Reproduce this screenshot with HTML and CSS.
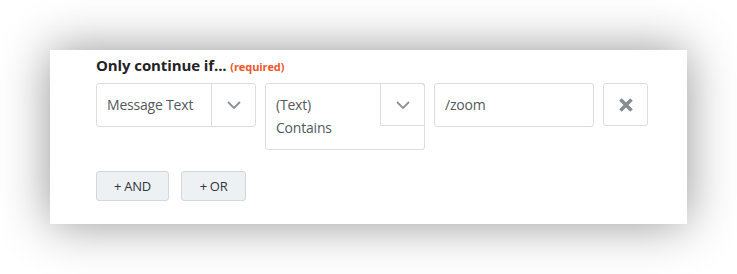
FILE: index.html
```html
<!DOCTYPE html>
<html>
<head>
<meta charset="utf-8">
<link rel="stylesheet" href="styles.css">
</head>
<body>
<div class="card">
  <div class="title">Only continue if... <span class="req">(required)</span></div>
  <div class="row">
    <div class="select">
      <div class="sel-text">Message Text</div>
      <div class="sel-btn">
        <svg width="14" height="8" viewBox="0 0 14 8"><path d="M1 1 L7 7 L13 1" fill="none" stroke="#8b9297" stroke-width="1.8"/></svg>
      </div>
    </div>
    <div class="select tall">
      <div class="sel-text multi">(Text)<br>Contains</div>
      <div class="sel-btn">
        <svg width="14" height="8" viewBox="0 0 14 8"><path d="M1 1 L7 7 L13 1" fill="none" stroke="#8b9297" stroke-width="1.8"/></svg>
      </div>
    </div>
    <div class="input">/zoom</div>
    <div class="remove">
      <svg width="16" height="16" viewBox="0 0 16 16"><path d="M2.5 2.5 L13.5 13.5 M13.5 2.5 L2.5 13.5" stroke="#868d92" stroke-width="3.6" stroke-linecap="butt"/></svg>
    </div>
  </div>
  <div class="actions">
    <button class="btn and">+ AND</button>
    <button class="btn or">+ OR</button>
  </div>
</div>
</body>
</html>
```
FILE: styles.css
```css
html, body {
  margin: 0;
  padding: 0;
  background: #ffffff;
}
body {
  height: 274px;
  box-sizing: border-box;
  padding: 50px 0 0 50px;
  font-family: "Open Sans", "Noto Sans", sans-serif;
}
.card {
  width: 637px;
  height: 174px;
  box-sizing: border-box;
  background: #fff;
  box-shadow: 0 0 46px rgba(0, 0, 0, 0.42);
  padding: 4px 0 0 46px;
}
.title {
  font-size: 15px;
  font-weight: 700;
  color: #1f2326;
  line-height: 22px;
  letter-spacing: -0.1px;
  height: 22px;
  margin-bottom: 7px;
}
.req {
  font-size: 11px;
  font-weight: 700;
  color: #f2552b;
  letter-spacing: -0.1px;
}
.row {
  display: flex;
  align-items: flex-start;
  gap: 9px;
}
.select {
  width: 160px;
  height: 44px;
  box-sizing: border-box;
  border: 1px solid #d9dde0;
  border-radius: 3px;
  display: flex;
}
.select.tall {
  height: 67px;
  align-items: flex-start;
}
.sel-text {
  flex: 1;
  padding-left: 10px;
  font-size: 14px;
  color: #525a60;
  line-height: 42px;
  letter-spacing: -0.2px;
}
.sel-text.multi {
  line-height: 22.6px;
  padding-top: 10px;
}
.sel-btn {
  width: 44px;
  height: 42px;
  box-sizing: border-box;
  border-left: 1px solid #d9dde0;
  display: flex;
  align-items: center;
  justify-content: center;
}
.tall .sel-btn {
  border-bottom: 1px solid #d9dde0;
  height: 43px;
  margin-top: -1px;
  border-top: 1px solid #d9dde0;
  margin-right: -1px;
  border-right: 1px solid #d9dde0;
  border-radius: 0 3px 0 0;
  width: 45px;
}
.input {
  width: 160px;
  height: 44px;
  box-sizing: border-box;
  border: 1px solid #d9dde0;
  border-radius: 3px;
  padding-left: 10px;
  font-size: 14px;
  color: #525a60;
  line-height: 42px;
  letter-spacing: -0.2px;
}
.remove {
  width: 45px;
  height: 43px;
  box-sizing: border-box;
  border: 1px solid #d9dde0;
  border-radius: 3px;
  display: flex;
  align-items: center;
  justify-content: center;
}
.actions {
  display: flex;
  gap: 12px;
  margin-top: 21px;
}
.btn {
  height: 30px;
  box-sizing: border-box;
  border: 1px solid #d3d8db;
  border-radius: 3px;
  background: #eef1f3;
  font-family: "Open Sans", "Noto Sans", sans-serif;
  font-size: 13px;
  color: #2f3539;
  padding: 0;
  letter-spacing: -0.3px;
}
.btn.and { width: 73px; }
.btn.or { width: 65px; }
```
